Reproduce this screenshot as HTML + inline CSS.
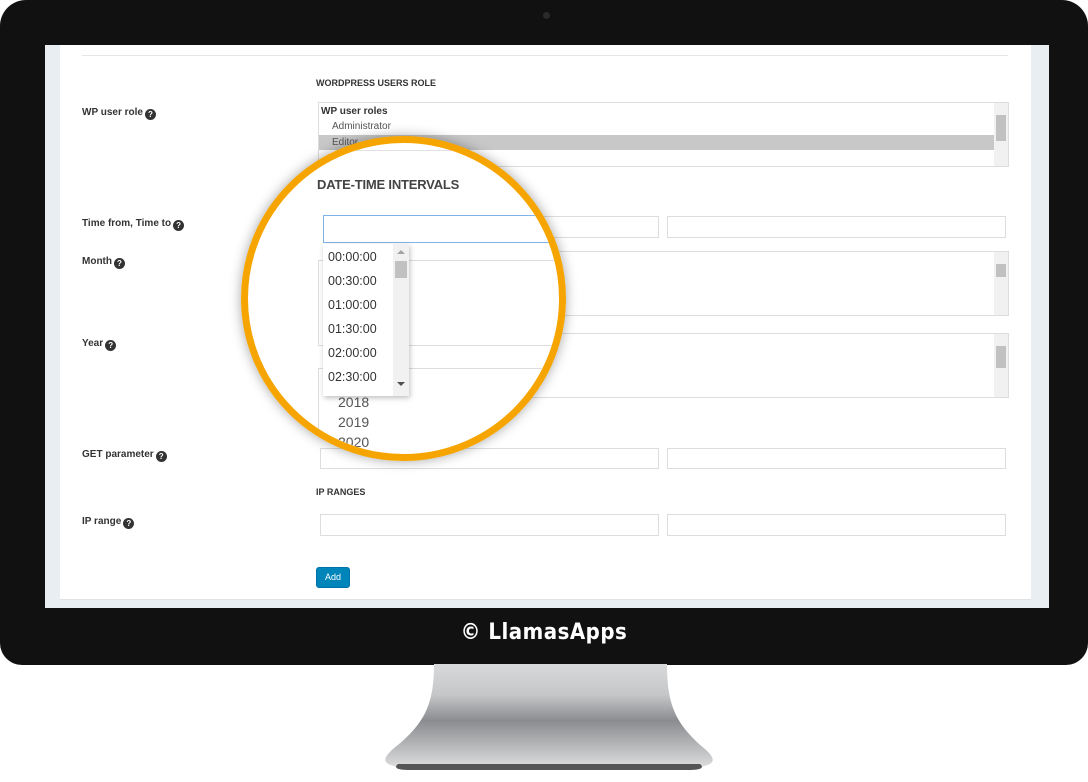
<!DOCTYPE html>
<html><head><meta charset="utf-8"><style>
*{margin:0;padding:0;box-sizing:border-box}
body{width:1088px;height:782px;background:#fff;position:relative;overflow:hidden;font-family:"Liberation Sans",sans-serif}
.a{position:absolute}
.lbl{position:absolute;font-size:10px;font-weight:bold;color:#333;line-height:12px}
.q{display:inline-block;width:11px;height:11px;border-radius:50%;background:#333;color:#fff;font-size:8px;text-align:center;line-height:11px;vertical-align:-2px;margin-left:2px}
.inp{position:absolute;border:1px solid #ddd;background:#fff}
.sb{position:absolute;right:0;top:0;bottom:0;width:14px;background:#f1f1f1}
.thumb{position:absolute;left:2px;width:10px;background:#c1c1c1}
.sec{position:absolute;font-size:9px;font-weight:bold;color:#333}
</style></head><body>
<div class="a" style="left:0;top:0;width:1088px;height:665px;background:#111;border-radius:26px 26px 22px 22px"></div>
<div class="a" style="left:543px;top:12px;width:7px;height:7px;border-radius:50%;background:#2a2a2a"></div>
<svg class="a" style="left:0;top:664px" width="1088" height="118">
<defs><linearGradient id="g" x1="0" y1="0" x2="0" y2="1"><stop offset="0" stop-color="#d8d9db"/><stop offset="0.3" stop-color="#c5c6c8"/><stop offset="0.55" stop-color="#8a8c8f"/><stop offset="0.8" stop-color="#b8b9bb"/><stop offset="1" stop-color="#dcdcdd"/></linearGradient></defs>
<path d="M434 0 L667 0 C667 40 675 60 705 85 C716 95 716 100 700 103 L398 103 C382 100 382 95 393 85 C425 60 434 40 434 0 Z" fill="url(#g)"/>
<path d="M398 100 L700 100 C705 104 700 106 690 106 L408 106 C398 106 393 104 398 100Z" fill="#555"/>
</svg>
<div class="a" style="left:45px;top:45px;width:1004px;height:563px;background:#e9eef2"></div>
<div class="a" style="left:60px;top:45px;width:971px;height:555px;background:#fff;border-bottom:1px solid #dfe3e6"></div>
<div class="a" style="left:82px;top:55px;width:926px;height:1px;background:#e5e5e5"></div>
<div class="a" style="left:0;top:620px;width:1088px;text-align:center;color:#fff;font-size:22px;font-weight:bold;letter-spacing:0.5px;font-family:'DejaVu Sans Condensed','Liberation Sans',sans-serif">© LlamasApps</div>

<div class="sec" style="left:316px;top:78px">WORDPRESS USERS ROLE</div>
<div class="lbl" style="left:82px;top:107px">WP user role<span class="q">?</span></div>
<div class="inp" style="left:318px;top:102px;width:691px;height:65px">
 <div class="a" style="left:2px;top:3px;font-size:10px;font-weight:bold;color:#333">WP user roles</div>
 <div class="a" style="left:13px;top:18px;font-size:10px;color:#555">Administrator</div>
 <div class="a" style="left:0;top:32px;width:675px;height:15px;background:#c8c8c8"></div>
 <div class="a" style="left:13px;top:34px;font-size:10px;color:#555">Editor</div>
 <div class="sb"><div class="thumb" style="top:12px;height:26px"></div></div>
</div>
<div class="lbl" style="left:82px;top:218px">Time from, Time to<span class="q">?</span></div>
<div class="inp" style="left:320px;top:216px;width:339px;height:22px"></div>
<div class="inp" style="left:667px;top:216px;width:339px;height:22px"></div>
<div class="lbl" style="left:82px;top:256px">Month<span class="q">?</span></div>
<div class="inp" style="left:318px;top:251px;width:691px;height:65px"><div class="sb"><div class="thumb" style="top:12px;height:13px"></div></div></div>
<div class="lbl" style="left:82px;top:338px">Year<span class="q">?</span></div>
<div class="inp" style="left:318px;top:333px;width:691px;height:65px"><div class="sb"><div class="thumb" style="top:12px;height:22px"></div></div></div>
<div class="lbl" style="left:82px;top:449px">GET parameter<span class="q">?</span></div>
<div class="inp" style="left:320px;top:448px;width:339px;height:21px"></div>
<div class="inp" style="left:667px;top:448px;width:339px;height:21px"></div>
<div class="sec" style="left:316px;top:487px">IP RANGES</div>
<div class="lbl" style="left:82px;top:516px">IP range<span class="q">?</span></div>
<div class="inp" style="left:320px;top:514px;width:339px;height:22px"></div>
<div class="inp" style="left:667px;top:514px;width:339px;height:22px"></div>
<div class="a" style="left:316px;top:567px;width:34px;height:21px;background:#0085ba;border-radius:3px;border:1px solid #0073aa;color:#fff;font-size:9px;text-align:center;line-height:19px">Add</div>

<div class="a" style="left:241px;top:136px;width:325px;height:325px;border-radius:50%;box-shadow:0 0 12px rgba(0,0,0,.35)"></div>
<div class="a" style="left:241px;top:136px;width:325px;height:325px;border-radius:50%;overflow:hidden;background:#fff;border:7px solid #f6a500">
 <div class="a" style="left:-248px;top:-143px;width:1088px;height:782px">
  <div class="a" style="left:317px;top:177px;font-size:13px;font-weight:bold;color:#444;letter-spacing:-.2px">DATE-TIME INTERVALS</div>
  <div class="a" style="left:318px;top:150px;width:800px;height:1px;background:#e2e2e2"></div>
  <div class="a" style="left:323px;top:215px;width:232px;height:28px;border:1px solid #7eb4ea"></div>
  <div class="a" style="left:550px;top:217px;width:400px;height:22px;border:1px solid #ddd"></div>
  <div class="a" style="left:318px;top:260px;width:800px;height:86px;border:1px solid #ddd"></div>
  <div class="a" style="left:318px;top:368px;width:800px;height:100px;border:1px solid #ddd"></div>
  <div class="a" style="left:338px;top:392px;font-size:14px;color:#555;line-height:20px">2018<br>2019<br>2020</div>
  <div class="a" style="left:323px;top:244px;width:86px;height:152px;background:#fff;box-shadow:1px 2px 5px rgba(0,0,0,.25)">
   <div class="a" style="left:5px;top:1px;font-size:12.5px;color:#333;line-height:24px">00:00:00<br>00:30:00<br>01:00:00<br>01:30:00<br>02:00:00<br>02:30:00</div>
   <div class="a" style="right:0;top:0;width:16px;height:152px;background:#f1f1f1">
    <div class="a" style="left:4px;top:6px;width:0;height:0;border:4px solid transparent;border-bottom-color:#a3a3a3;border-top:0"></div>
    <div class="a" style="left:2px;top:17px;width:12px;height:17px;background:#c1c1c1"></div>
    <div class="a" style="left:4px;top:138px;width:0;height:0;border:4px solid transparent;border-top-color:#505050;border-bottom:0"></div>
   </div>
  </div>
 </div>
</div>
</body></html>
